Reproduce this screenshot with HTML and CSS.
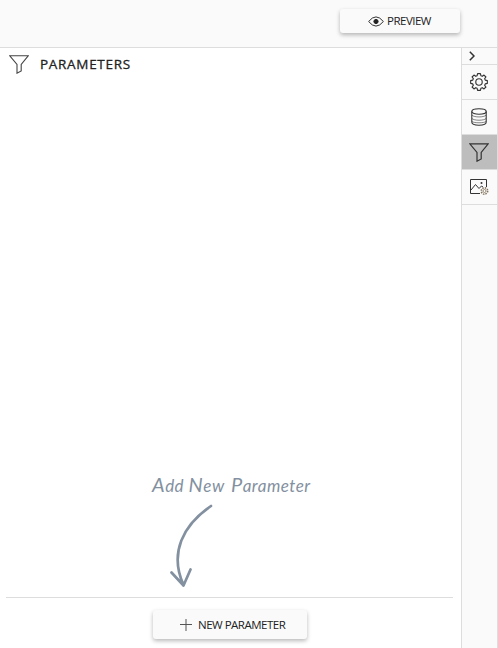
FILE: index.html
```html
<!DOCTYPE html>
<html lang="en">
<head>
<meta charset="utf-8">
<title>Parameters</title>
<link rel="stylesheet" href="styles.css">
</head>
<body>
<div class="app">
  <header class="toolbar">
    <button class="button preview">
      <svg width="16" height="11" viewBox="0 0 16 11" fill="none" stroke="#333"><path d="M.6 5.5Q8-3.7 15.4 5.5Q8 14.7.6 5.5Z"/><circle cx="8" cy="5.5" r="2.1" fill="#222" stroke="#222"/></svg>
      <span class="preview-label">PREVIEW</span>
    </button>
  </header>
  <div class="workspace">
    <main class="panel">
      <div class="panel-title">
        <svg width="20" height="19" viewBox="0 0 20 19" fill="none" stroke="#444" stroke-width="1.1"><path d="M.8.8H19.2L12.2 9.4V16L8 18.2V9.4Z"/></svg>
        <h1>PARAMETERS</h1>
      </div>
      <div class="empty">
        <div class="hint"><span class="hint-cap">A</span>dd <span class="hint-cap">N</span>ew <span class="hint-word"><span class="hint-cap">P</span>arameter</span></div>
        <svg class="arrow" width="46" height="86" viewBox="0 0 46 86" fill="none" stroke="#8390a0" stroke-width="2.7" stroke-linecap="round" stroke-linejoin="round"><path d="M41 4C13 23-1 51 13.500 83M1.500 70.500L13.500 83.500L20.500 67.500"/></svg>
      </div>
      <footer class="actions">
        <button class="button create">
          <svg width="12" height="12" viewBox="0 0 12 12" stroke="#555"><path d="M6 0V12M0 5.500H12"/></svg>
          <span class="create-label">NEW PARAMETER</span>
        </button>
      </footer>
    </main>
    <nav class="rail">
      <a class="collapse"><svg width="6" height="10" viewBox="0 0 6 10" fill="none" stroke="#333" stroke-width="1.5"><path d="M.8.8L5 5L.8 9.200"/></svg></a>
      <a class="tab"><svg width="18" height="18" viewBox="-9.500 -9.500 19 19" fill="none" stroke="#333" stroke-width="1.2" stroke-linejoin="round"><path d="M-1.500-8.800H1.500L2-6.600L3.500-6L5.300-7.300L7.300-5.300L6-3.500L6.600-2L8.800-1.500V1.500L6.600 2L6 3.500L7.300 5.300L5.300 7.300L3.500 6L2 6.600L1.500 8.800H-1.500L-2 6.600L-3.500 6L-5.300 7.300L-7.300 5.300L-6 3.500L-6.600 2L-8.800 1.500V-1.500L-6.600-2L-6-3.500L-7.300-5.300L-5.300-7.300L-3.500-6L-2-6.600Z"/><circle r="3.400"/></svg></a>
      <a class="tab"><svg width="16" height="18" viewBox="0 0 16 18" fill="none" stroke="#333" stroke-width="1.100"><ellipse cx="8" cy="3.500" rx="7.200" ry="2.700"/><path d="M.8 3.500V14C.8 18.300 15.200 18.300 15.200 14V3.500"/><path d="M1 7.200C3 9.500 13 9.500 15 7.200M1 10.500C3 12.800 13 12.800 15 10.500M1 13.500C3 15.200 13 15.200 15 13.500" stroke-width=".6"/></svg></a>
      <a class="tab active"><svg width="20" height="19" viewBox="0 0 20 19" fill="none" stroke="#333" stroke-width="1.200"><path d="M.8.8H19.200L12.200 9.400V16L8 18.200V9.400Z"/></svg></a>
      <a class="tab"><svg width="20" height="18" viewBox="0 0 20 18" fill="none" stroke="#333"><path d="M11 15.500H1.500V1.500H17.500V9M2 12L6.500 6.500L10 10.500L12.500 8L14 9"/><circle cx="12.500" cy="5" r="1" fill="#333" stroke="none"/><circle cx="15.500" cy="13" r="3.200" stroke="#80725b" stroke-width="1.500" stroke-dasharray="1.500 1"/><circle cx="15.500" cy="13" r="1.500" stroke="#80725b" stroke-width=".8"/></svg></a>
    </nav>
  </div>
</div>
</body>
</html>
```

FILE: styles.css
```css
* { box-sizing: border-box; }
body { margin: 0; background: #fff; font-family: "Open Sans", "Noto Sans", sans-serif; color: #222; }
.app { height: 648px; display: flex; flex-direction: column; border-right: 1px solid #ddd; }
.toolbar { height: 48px; flex: none; display: flex; justify-content: flex-end; padding: 9px 37px 0 0; background: #fafafa; border-bottom: 1px solid #ddd; }
.button { display: flex; align-items: center; border: 0; border-radius: 3px; background: #fafafa; color: #222; font: 11.5px/16px "Open Sans", sans-serif; white-space: nowrap; box-shadow: 0 2px 4px rgba(0, 0, 0, .28); }
.button svg { flex: none; }
.preview { width: 120px; height: 24px; padding: 0 0 0 28px; gap: 3px; }
.preview-label { letter-spacing: -.5px; }
.workspace { flex: 1; display: flex; min-height: 0; }
.panel { flex: 1; display: flex; flex-direction: column; }
.panel-title { height: 32px; display: flex; align-items: center; padding-left: 9px; gap: 11px; }
h1 { margin: 0; font-size: 13.5px; line-height: 18px; font-weight: 400; letter-spacing: .7px; white-space: nowrap; -webkit-text-stroke: .3px #222; }
.empty { flex: 1; display: flex; flex-direction: column; justify-content: flex-end; padding: 0 0 9px 152px; }
.hint { height: 28px; color: #8390a0; font: italic 17px/24px Lato, cursive; letter-spacing: .5px; white-space: nowrap; }
.hint-cap { font-size: 20px; }
.hint-word { margin-left: 2px; }
.arrow { margin: 2px 0 0 18px; }
.actions { height: 51px; margin: 0 8px 0 6px; border-top: 1px solid #ddd; padding: 12px 0 0 147px; }
.create { width: 154px; height: 29px; padding: 0 0 0 27px; gap: 6px; }
.create-label { letter-spacing: -.5px; }
.rail { width: 36px; flex: none; background: #fafafa; border-left: 1px solid #ddd; }
.collapse, .tab { display: flex; align-items: center; justify-content: center; border-bottom: 1px solid #ddd; }
.collapse { height: 17px; padding-right: 15px; }
.tab { height: 35px; padding-right: 2px; }
.active { background: #bdbdbd; }
```
